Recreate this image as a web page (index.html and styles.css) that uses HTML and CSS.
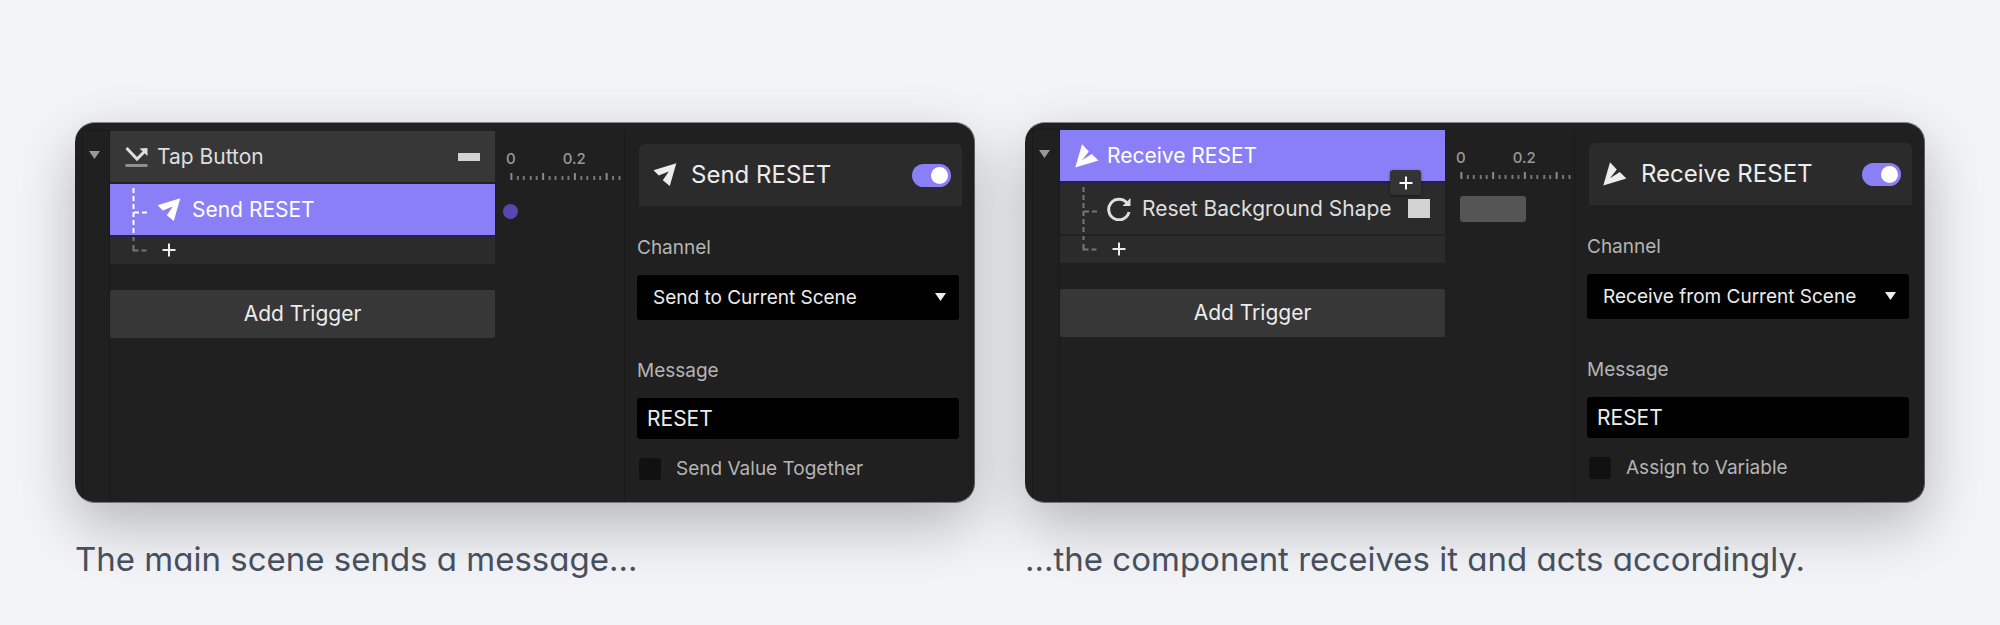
FILE: index.html
```
<!DOCTYPE html>
<html lang="en">
<head>
<meta charset="utf-8">
<meta name="viewport" content="width=device-width, initial-scale=1">
<title>Send and Receive</title>
<link rel="stylesheet" href="styles.css">
</head>
<body>
<svg class="defs" aria-hidden="true">
  <symbol id="send" viewBox="0 0 24 24"><path d="M.5 7.200 23.300.2 16.800 23 9.800 17.200 15.800 8.600 5.800 12.400Z"/></symbol>
  <symbol id="receive" viewBox="0 0 24 24"><path d="M7 .3 13.800 7.600 7 16.200 16.800 10 23.400 16.600.3 23.500Z"/></symbol>
  <symbol id="plus" viewBox="0 0 14 14"><path d="M7 .5v13M.5 7h13"/></symbol>
  <symbol id="ruler" viewBox="0 0 130 8"><path class="major" d="M16.500 0v7M48.500 0v7M80.500 0v7M112.500 0v7"/><path class="minor" d="M23 3v4M29 3v4M36 3v4M42 3v4M55 3v4M61 3v4M68 3v4M74 3v4M87 3v4M93 3v4M100 3v4M106 3v4M119 3v4M125.500 3v4"/></symbol>
</svg>
<main class="scenes">
  <figure class="scene">
    <section class="panel" aria-label="Sender">
      <div class="gutter"><button class="fold" aria-label="Collapse"><svg viewBox="0 0 12 8"><path d="M0 0h11L5.500 8z"/></svg></button></div>
      <div class="tree">
        <div class="row row--trigger">
          <svg class="icon" viewBox="0 0 24 24"><path class="tap-line" d="m1.500 3 10.500 11L20 6"/><path d="m14.500 3.500 8-.5v8z"/><path class="tap-base" d="M.5 20.500h22"/></svg>
          <span class="name">Tap Button</span><i class="chip chip--flat"></i>
        </div>
        <div class="row row--selected">
          <svg class="branch" viewBox="0 0 47 51"><path d="M23.500 4v47" stroke-dasharray="5 3"/><path d="M24 28.500h13" stroke-dasharray="5 3"/></svg>
          <svg class="icon"><use href="#send"/></svg><span class="name name--nested">Send RESET</span>
        </div>
        <div class="row row--add">
          <svg class="branch" viewBox="0 0 47 25"><path d="M23.500 0v4m0 4v5.500h5m3 0h5"/></svg>
          <button class="add" aria-label="Add response"><svg class="plus"><use href="#plus"/></svg></button>
        </div>
        <button class="add-trigger">Add Trigger</button>
      </div>
      <div class="timeline">
        <div class="marks"><span>0</span><span>0.2</span></div>
        <svg class="ruler" preserveAspectRatio="xMinYMin" viewBox="0 0 130 8"><use href="#ruler"/></svg>
        <i class="key key--dot"></i>
      </div>
      <div class="inspector">
        <header class="head"><svg class="icon"><use href="#send"/></svg><h2 class="title">Send RESET</h2><input class="switch" type="checkbox" checked aria-label="Enabled"></header>
        <label class="label" for="channel-a">Channel</label>
        <div class="select"><select id="channel-a"><option>Send to Current Scene</option></select><svg viewBox="0 0 12 8"><path d="M0 0h11L5.500 8z"/></svg></div>
        <label class="label" for="message-a">Message</label>
        <input class="text" id="message-a" type="text" value="RESET">
        <div class="option"><input class="check" id="option-a" type="checkbox"><label for="option-a">Send Value Together</label></div>
      </div>
    </section>
    <figcaption class="caption">The main scene sends a message...</figcaption>
  </figure>
  <figure class="scene">
    <section class="panel panel--slim" aria-label="Receiver">
      <div class="gutter"><button class="fold" aria-label="Collapse"><svg viewBox="0 0 12 8"><path d="M0 0h11L5.500 8z"/></svg></button></div>
      <div class="tree">
        <div class="row row--trigger row--selected">
          <svg class="icon"><use href="#receive"/></svg><span class="name">Receive RESET</span>
          <button class="insert" aria-label="Insert"><svg class="plus"><use href="#plus"/></svg></button>
        </div>
        <div class="row">
          <svg class="branch" viewBox="0 0 47 51"><path d="M23.500 4v47" stroke-dasharray="5 3"/><path d="M24 28.500h13" stroke-dasharray="5 3"/></svg>
          <svg class="icon" viewBox="0 0 24 24"><path class="reset-arc" d="M20 6A10.300 10.300 0 1 0 22 15"/><path d="M23.500 1v8h-8z"/></svg>
          <span class="name name--nested">Reset Background Shape</span><i class="chip"></i>
        </div>
        <div class="row row--add">
          <svg class="branch" viewBox="0 0 47 25"><path d="M23.500 0v4m0 4v5.500h5m3 0h5"/></svg>
          <button class="add" aria-label="Add response"><svg class="plus"><use href="#plus"/></svg></button>
        </div>
        <button class="add-trigger">Add Trigger</button>
      </div>
      <div class="timeline">
        <div class="marks"><span>0</span><span>0.2</span></div>
        <svg class="ruler" preserveAspectRatio="xMinYMin" viewBox="0 0 130 8"><use href="#ruler"/></svg>
        <i class="key key--bar"></i>
      </div>
      <div class="inspector">
        <header class="head"><svg class="icon"><use href="#receive"/></svg><h2 class="title">Receive RESET</h2><input class="switch" type="checkbox" checked aria-label="Enabled"></header>
        <label class="label" for="channel-b">Channel</label>
        <div class="select"><select id="channel-b"><option>Receive from Current Scene</option></select><svg viewBox="0 0 12 8"><path d="M0 0h11L5.500 8z"/></svg></div>
        <label class="label" for="message-b">Message</label>
        <input class="text" id="message-b" type="text" value="RESET">
        <div class="option"><input class="check" id="option-b" type="checkbox"><label for="option-b">Assign to Variable</label></div>
      </div>
    </section>
    <figcaption class="caption">...the component receives it and acts accordingly.</figcaption>
  </figure>
</main>
</body>
</html>
```
FILE: styles.css
```
* { box-sizing: border-box; }
body { margin: 0; background: #f2f4f8; font-family: Inter, "Liberation Sans", sans-serif; }
button, input, select { font: inherit; color: inherit; margin: 0; }
button { padding: 0; border: 0; background: none; cursor: pointer; }
svg { display: block; fill: currentColor; }
.defs { position: absolute; width: 0; height: 0; }

.scenes { display: grid; grid-template-columns: repeat(2, minmax(0, 1fr)); gap: 50px; padding: 122px 75px 30px; }
.scene { display: flex; flex-direction: column; margin: 0; }
.panel {
  flex: 1; display: grid; grid-template-columns: 35px minmax(0, 385fr) minmax(0, 130fr) minmax(0, 349fr);
  padding-top: 8px; overflow: hidden; border: 1px solid #5b5b5d; border-left: 0; border-radius: 20px;
  border-top-color: #858587; border-bottom-color: #77777a;
  background: #202020; color: #ececec; font-size: 19px; line-height: 24px;
  box-shadow: 0 22px 60px rgba(0, 0, 0, .26);
}
.panel--slim { padding-top: 7px; }

.gutter { margin-left: 7px; border: solid #191919; border-width: 0 1px; box-shadow: 0 -1px #191919; }
.fold { display: block; width: 12px; margin: 20px 0 0 6px; color: #999; }

.tree { display: flex; flex-direction: column; }
.row { position: relative; display: flex; align-items: center; height: 53px; border-bottom: 2px solid #222; background: #2b2b2b; color: #dedede; }
.row--trigger { padding-left: 15px; background: #373737; }
.row--selected { background: #8b7ff8; color: #fff; border-bottom-color: #25204a; }
.row--add { height: 27px; margin-bottom: 26px; padding-bottom: 2px; border: 0; }
.icon { flex: none; width: 24px; height: 24px; }
.name { flex: 1; padding-left: 8px; white-space: nowrap; font-size: 21px; }
.name--nested { padding-left: 11px; }
.branch { flex: none; align-self: stretch; width: 47px; fill: none; stroke: #777; stroke-width: 2px; }
.row--selected .branch { stroke: #fff; }
.chip { width: 22px; height: 19px; margin-right: 15px; background: #d2d2d2; }
.chip--flat { height: 8px; }
.plus { width: 14px; height: 14px; fill: none; stroke: currentColor; stroke-width: 2px; }
.add { margin-left: 5px; color: #ececec; }
.insert { position: absolute; right: 24px; bottom: -14px; z-index: 1; display: grid; place-items: center; width: 31px; height: 25px; border-radius: 3px; background: #343434; box-shadow: 0 1px 3px rgba(0, 0, 0, .5); }
.add-trigger { height: 48px; border-radius: 2px; background: #373737; font-size: 21px; }
.tap-line { fill: none; stroke: currentColor; stroke-width: 3px; }
.tap-base { stroke: #8f8f8f; stroke-width: 3px; }
.reset-arc { fill: none; stroke: currentColor; stroke-width: 3px; }

.timeline { border-right: 1px solid #191919; color: #999; }
.marks { display: flex; gap: 47px; padding: 18px 0 0 11px; font-size: 15px; font-weight: 500; line-height: 20px; }
.ruler { width: 100%; height: 8px; margin-top: 4px; fill: none; }
.major { stroke: #8a8a8a; stroke-width: 2px; }
.minor { stroke: #777; stroke-width: 2px; }
.key { display: block; }
.key--dot { width: 15px; height: 15px; margin: 23px 0 0 8px; border-radius: 50%; background: #5a46b2; }
.key--bar { width: 66px; height: 26px; margin: 16px 0 0 15px; border-radius: 3px; background: #555; }

.inspector { display: flex; flex-direction: column; padding: 13px 15px 21px 12px; }
.head { display: flex; align-items: center; height: 62px; margin: 0 -3px 0 2px; padding: 0 11px 0 14px; border-radius: 6px 6px 0 0; background: #2b2b2b; }
.title { flex: 1; margin: 0; padding-left: 14px; font-size: 24px; font-weight: 400; line-height: 28px; white-space: nowrap; }
.switch { appearance: none; flex: none; display: flex; justify-content: flex-end; width: 39px; height: 23px; padding: 3px; border-radius: 12px; background: #8b7ff8; }
.switch::before { content: ""; width: 17px; height: 17px; border-radius: 50%; background: #fff; }
.switch:not(:checked) { justify-content: flex-start; background: #555; }
.label { margin: 30px 0 15px; color: #b4b4b4; line-height: 24px; }
.select { position: relative; margin-bottom: 9px; }
.select select { display: block; appearance: none; width: 100%; height: 45px; padding: 0 40px 0 16px; border: 0; border-radius: 3px; background: #000; }
.select svg { position: absolute; right: 12px; top: 18px; width: 12px; pointer-events: none; }
.text { height: 41px; padding: 0 10px; border: 0; border-radius: 3px; background: #000; font-size: 21px; }
.option { display: flex; align-items: center; gap: 15px; margin: 18px 0 0 2px; color: #b4b4b4; }
.check { appearance: none; flex: none; width: 22px; height: 22px; border-radius: 3px; background: #111; }
.check:checked { background: #8b7ff8; }
.caption { padding-top: 35px; color: #474f5c; font-size: 33px; line-height: 42px; font-feature-settings: "cv11"; white-space: nowrap; }
```
